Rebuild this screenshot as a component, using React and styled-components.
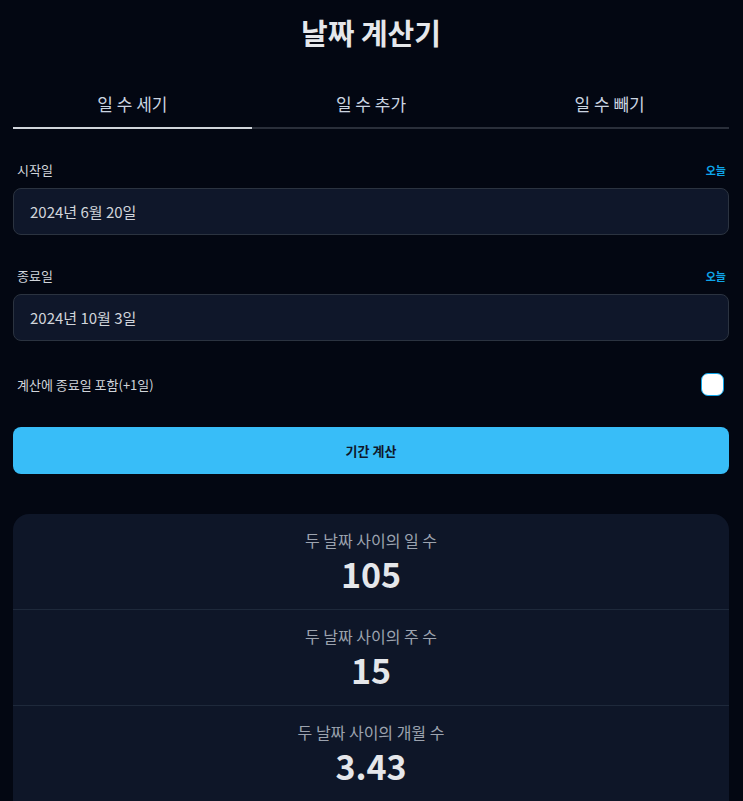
import React, { useState } from "react";
import styled, { createGlobalStyle } from "styled-components";

const GlobalStyle = createGlobalStyle`
  * { box-sizing: border-box; }
  body {
    margin: 0;
    background: #030712;
    color: #e5e7eb;
    font-family: "Noto Sans CJK KR", "Noto Sans", sans-serif;
  }
`;

const tabs = ["일 수 세기", "일 수 추가", "일 수 빼기"];

const results = [
  { label: "두 날짜 사이의 일 수", value: "105" },
  { label: "두 날짜 사이의 주 수", value: "15" },
  { label: "두 날짜 사이의 개월 수", value: "3.43" },
];

const App = () => {
  const [active, setActive] = useState(0);
  return (
    <>
      <GlobalStyle />
      <Page>
        <Title>날짜 계산기</Title>
        <TabBar>
          {tabs.map((t, i) => (
            <Tab key={t} $active={i === active} onClick={() => setActive(i)}>
              {t}
            </Tab>
          ))}
        </TabBar>

        <Field>
          <LabelRow>
            <Label>시작일</Label>
            <TodayLink>오늘</TodayLink>
          </LabelRow>
          <DateBox>2024년 6월 20일</DateBox>
        </Field>

        <Field>
          <LabelRow>
            <Label>종료일</Label>
            <TodayLink>오늘</TodayLink>
          </LabelRow>
          <DateBox>2024년 10월 3일</DateBox>
        </Field>

        <CheckRow>
          <Label>계산에 종료일 포함(+1일)</Label>
          <CheckBox />
        </CheckRow>

        <CalcButton>기간 계산</CalcButton>

        <ResultCard>
          {results.map((r) => (
            <ResultItem key={r.label}>
              <ResultLabel>{r.label}</ResultLabel>
              <ResultValue>{r.value}</ResultValue>
            </ResultItem>
          ))}
        </ResultCard>
      </Page>
    </>
  );
};

const Page = styled.div`
  padding: 8px 14px 0 13px;
  display: flex;
  flex-direction: column;
`;

const Title = styled.h1`
  margin: 0;
  text-align: center;
  font-size: 29px;
  font-weight: 700;
  line-height: 48px;
  color: #e5e7eb;
`;

const TabBar = styled.div`
  display: grid;
  grid-template-columns: repeat(3, 1fr);
  margin-top: 35px;
  border-bottom: 2px solid #2a2f3a;
`;

const Tab = styled.div`
  text-align: center;
  font-size: 17px;
  color: #cbd5e1;
  padding-bottom: 11px;
  margin-bottom: -2px;
  border-bottom: 2px solid ${(p) => (p.$active ? "#d1d5db" : "transparent")};
  cursor: pointer;
`;

const Field = styled.div`
  margin-top: 31px;
  & + & {
    margin-top: 31px;
  }
`;

const LabelRow = styled.div`
  display: flex;
  justify-content: space-between;
  align-items: center;
  padding: 0 3px 0 4px;
  margin-bottom: 9px;
`;

const Label = styled.span`
  font-size: 13px;
  color: #d1d5db;
`;

const TodayLink = styled.span`
  font-size: 11px;
  font-weight: 700;
  color: #0ea5e9;
  cursor: pointer;
`;

const DateBox = styled.div`
  height: 47px;
  display: flex;
  align-items: center;
  padding: 0 16px;
  background: #0f172a;
  border: 1px solid #2b3340;
  border-radius: 8px;
  font-size: 15px;
  color: #d1d5db;
`;

const CheckRow = styled.div`
  display: flex;
  justify-content: space-between;
  align-items: center;
  margin-top: 32px;
  padding: 0 5px 0 4px;
`;

const CheckBox = styled.span`
  width: 23px;
  height: 23px;
  border-radius: 7px;
  background: #ffffff;
  border: 1.5px solid #0ea5e9;
`;

const CalcButton = styled.button`
  margin-top: 31px;
  height: 47px;
  border: none;
  border-radius: 8px;
  background: #38bdf8;
  color: #0f172a;
  font-family: inherit;
  font-size: 13px;
  font-weight: 700;
  cursor: pointer;
`;

const ResultCard = styled.div`
  margin-top: 40px;
  background: #0e1628;
  border-radius: 16px 16px 0 0;
  display: flex;
  flex-direction: column;
`;

const ResultItem = styled.div`
  display: flex;
  flex-direction: column;
  align-items: center;
  padding: 14px 0 13px;
  border-bottom: 1px solid #1e293b;
`;

const ResultLabel = styled.div`
  font-size: 16px;
  color: #9ca3af;
  line-height: 24px;
`;

const ResultValue = styled.div`
  font-size: 34px;
  font-weight: 700;
  color: #e5e7eb;
  line-height: 44px;
`;

export default App;
